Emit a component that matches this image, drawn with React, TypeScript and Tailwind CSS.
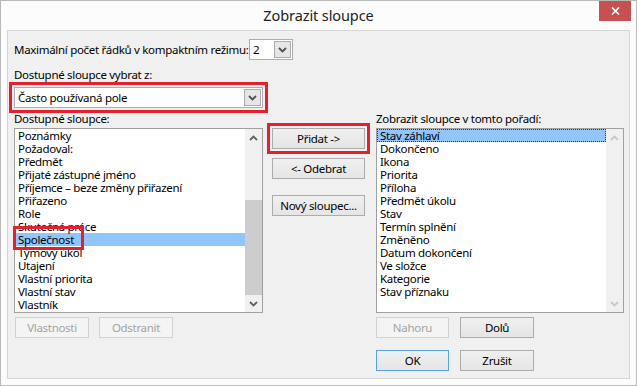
import type {ReactNode} from "react";

const leftItems = [
    "Poznámky",
    "Požadoval:",
    "Předmět",
    "Přijaté zástupné jméno",
    "Příjemce – beze změny přiřazení",
    "Přiřazeno",
    "Role",
    "Skutečná práce",
    "Společnost",
    "Týmový úkol",
    "Utajení",
    "Vlastní priorita",
    "Vlastní stav",
    "Vlastník",
];

const rightItems = [
    "Stav záhlaví",
    "Dokončeno",
    "Ikona",
    "Priorita",
    "Příloha",
    "Předmět úkolu",
    "Stav",
    "Termín splnění",
    "Změněno",
    "Datum dokončení",
    "Ve složce",
    "Kategorie",
    "Stav příznaku",
];

const Chevron = ({up = false, color = "#505050"}: {up?: boolean; color?: string}) => (
    <svg width="9" height="6" viewBox="0 0 9 6">
        <path
            d={up ? "M1 5 L4.5 1.5 L8 5" : "M1 1 L4.5 4.5 L8 1"}
            fill="none"
            stroke={color}
            strokeWidth="1.8"
        />
    </svg>
);

const Combo = ({value, width}: {value: string; width: string}) => (
    <div className={`${width} h-[21px] flex items-center bg-white border border-[#abadb3]`}>
        <span className="flex-1 pl-[3px] leading-[19px] text-black truncate">{value}</span>
        <div className="w-[17px] h-[17px] mr-[1px] flex items-center justify-center bg-[#e6e6e6] border border-[#acacac]">
            <Chevron/>
        </div>
    </div>
);

const Button = ({label, width, disabled, primary}: {label: string; width: string; disabled?: boolean; primary?: boolean}) => (
    <div
        className={`${width} h-[21px] flex items-center justify-center leading-[19px] border ${
            disabled
                ? "border-[#d3d3d3] bg-[#f4f4f4] text-[#a3a3a3]"
                : primary
                    ? "border-[#5aa0e8] bg-gradient-to-b from-[#f0f0f0] to-[#e5e5e5] text-black"
                    : "border-[#acacac] bg-gradient-to-b from-[#f0f0f0] to-[#e5e5e5] text-black"
        }`}
    >
        {label}
    </div>
);

const RedBox = ({children, className = ""}: {children: ReactNode; className?: string}) => (
    <div className={`border-[3px] border-[#e3202e] p-[2px] ${className}`}>{children}</div>
);

const Scrollbar = ({enabled}: {enabled: boolean}) => (
    <div className="w-[17px] h-full flex flex-col bg-[#f0f0f0]">
        <div className="h-[17px] flex items-center justify-center">
            <Chevron up color={enabled ? "#606060" : "#c8c8c8"}/>
        </div>
        <div className="flex-1 flex flex-col">
            {enabled && (
                <>
                    <div className="h-[54px]"/>
                    <div className="h-[95px] bg-[#cdcdcd]"/>
                </>
            )}
        </div>
        <div className="h-[17px] flex items-center justify-center">
            <Chevron color={enabled ? "#606060" : "#c8c8c8"}/>
        </div>
    </div>
);

const App = () => {
    return (
        <div className="w-[637px] h-[386px] flex flex-col bg-[#fcfcfc] border border-[#b9b9b9] font-['Noto_Sans',sans-serif] text-black overflow-hidden">
            {/* title bar */}
            <div className="h-[29px] shrink-0 grid grid-cols-[1fr_auto_1fr]">
                <div/>
                <div className="text-[14.5px] leading-[29px] text-[#222] tracking-[-0.1px]">Zobrazit sloupce</div>
                <div className="flex justify-end pr-[5px]">
                    <div className="w-[32px] h-[20px] flex items-center justify-center bg-[#c75050]">
                        <svg width="9" height="8" viewBox="0 0 9 8">
                            <path d="M1 0.5 L8 7.5 M8 0.5 L1 7.5" stroke="white" strokeWidth="1.6"/>
                        </svg>
                    </div>
                </div>
            </div>

            {/* body */}
            <div className="flex-1 mx-[6px] mb-[6px] flex flex-col bg-[#f0f0f0] border border-[#d5d5d5] pl-[6px] pt-[8px] text-[11.5px] tracking-[-0.3px]">
                <div className="h-[21px] flex items-center">
                    <span className="w-[235px] whitespace-nowrap leading-[15px]">Maximální počet řádků v kompaktním režimu:</span>
                    <Combo value="2" width="w-[44px]"/>
                </div>

                <div className="mt-[7px] h-[15px] leading-[15px]">Dostupné sloupce vybrat z:</div>
                <RedBox className="-ml-[5px] w-[259px]">
                    <Combo value="Často používaná pole" width="w-[249px]"/>
                </RedBox>

                <div className="flex">
                    {/* available columns */}
                    <div className="w-[249px] flex flex-col">
                        <div className="h-[11px] leading-[11px] whitespace-nowrap">Dostupné sloupce:</div>
                        <div className="mt-[4px] h-[185px] flex bg-white border border-[#a0a0a0]">
                            <div className="flex-1 relative">
                                {leftItems.map((item) => (
                                    <div
                                        key={item}
                                        className={`h-[13px] leading-[13px] pl-[3px] whitespace-nowrap ${item === "Společnost" ? "bg-[#90c5fd]" : ""}`}
                                    >
                                        {item}
                                    </div>
                                ))}
                                <div className="absolute left-[-2px] top-[97px] w-[71px] h-[24px] border-[3px] border-[#e3202e]"/>
                            </div>
                            <Scrollbar enabled/>
                        </div>
                        <div className="mt-[4px] pl-[1px] flex gap-[10px]">
                            <Button label="Vlastnosti" width="w-[74px]" disabled/>
                            <Button label="Odstranit" width="w-[74px]" disabled/>
                        </div>
                    </div>

                    {/* action buttons */}
                    <div className="ml-[4px] mt-[10px] w-[103px] flex flex-col">
                        <RedBox>
                            <Button label="Přidat ->" width="w-[93px]"/>
                        </RedBox>
                        <div className="ml-[5px] mt-[4px]">
                            <Button label="<- Odebrat" width="w-[93px]"/>
                        </div>
                        <div className="ml-[5px] mt-[16px]">
                            <Button label="Nový sloupec..." width="w-[93px]"/>
                        </div>
                    </div>

                    {/* shown columns */}
                    <div className="ml-[6px] w-[248px] flex flex-col">
                        <div className="h-[11px] leading-[11px] whitespace-nowrap">Zobrazit sloupce v tomto pořadí:</div>
                        <div className="mt-[4px] h-[185px] flex bg-white border border-[#a0a0a0]">
                            <div className="flex-1">
                                {rightItems.map((item, i) => (
                                    <div
                                        key={item}
                                        className={`h-[13px] leading-[11px] pl-[2px] whitespace-nowrap border ${i === 0 ? "bg-[#90c5fd] border-dotted border-[#333]" : "border-transparent"}`}
                                    >
                                        {item}
                                    </div>
                                ))}
                            </div>
                            <Scrollbar enabled={false}/>
                        </div>
                        <div className="mt-[4px] flex gap-[11px]">
                            <Button label="Nahoru" width="w-[73px]" disabled/>
                            <Button label="Dolů" width="w-[74px]"/>
                        </div>
                        <div className="mt-[12px] flex gap-[11px]">
                            <Button label="OK" width="w-[73px]" primary/>
                            <Button label="Zrušit" width="w-[74px]"/>
                        </div>
                    </div>
                </div>
            </div>
        </div>
    );
};

export default App;
